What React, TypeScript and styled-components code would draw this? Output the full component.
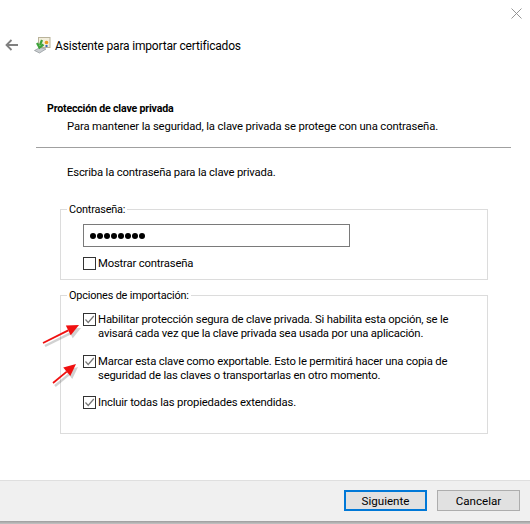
import React from "react";
import styled, { createGlobalStyle } from "styled-components";

const Global = createGlobalStyle`
  html, body { margin: 0; padding: 0; background: #fff; }
  #root { width: 530px; height: 524px; overflow: hidden; }
  * { box-sizing: border-box; }
`;

const Dialog = styled.div`
  position: relative;
  width: 530px;
  height: 524px;
  display: flex;
  flex-direction: column;
  background: #fff;
  color: #000;
  font-family: Roboto, "Noto Sans", sans-serif;
  font-size: 11.3px;
  letter-spacing: -0.18px;
  line-height: 14px;
  overflow: hidden;
`;

const CloseRow = styled.div`
  height: 8px;
  margin-top: 8px;
  display: flex;
  justify-content: flex-end;
`;

const CloseIcon = styled.svg`
  width: 11px;
  height: 11px;
  margin-right: 8px;
`;

const TitleBar = styled.header`
  margin-top: 20px;
  height: 18px;
  display: flex;
  align-items: center;
  padding-left: 5px;
`;

const BackIcon = styled.svg`
  width: 14px;
  height: 12px;
  flex: none;
`;

const WizardIcon = styled.svg`
  width: 17px;
  height: 17px;
  flex: none;
  margin-left: 15px;
`;

const Title = styled.h1`
  margin: 1px 0 0 4px;
  font-size: 12px;
  font-weight: 400;
  line-height: 18px;
  white-space: nowrap;
`;

const Content = styled.main`
  flex: 1;
  display: flex;
  flex-direction: column;
  padding: 47px 19px 0 36px;
`;

const Heading = styled.h2`
  margin: 0 0 0 11px;
  font-size: 10.6px;
  font-weight: 700;
  line-height: 15px;
`;

const Lead = styled.p`
  margin: 4px 0 0 31px;
  white-space: nowrap;
  letter-spacing: -0.14px;
`;

const Rule = styled.hr`
  margin: 13px 0 0;
  border: 0;
  height: 1px;
  background: #a0a0a0;
`;

const Prompt = styled.p`
  margin: 18px 0 0 31px;
`;

const Group = styled.fieldset<{ $height: number; $gap: number }>`
  position: relative;
  margin: ${(p) => p.$gap}px 0 0 24px;
  padding: 0;
  width: 428px;
  height: ${(p) => p.$height}px;
  border: 1px solid #dcdcdc;
  display: flex;
  flex-direction: column;
`;

const Legend = styled.span`
  position: absolute;
  top: -7px;
  left: 6px;
  padding: 0 2px;
  background: #fff;
  font-size: 10.9px;
`;

const PasswordBox = styled.div`
  margin: 14px 0 0 22px;
  width: 267px;
  height: 23px;
  border: 1px solid #7a7a7a;
  display: flex;
  align-items: center;
  gap: 1px;
  padding-left: 6px;
`;

const Dot = styled.i`
  width: 6px;
  height: 6px;
  border-radius: 50%;
  background: #000;
`;

const CheckRow = styled.label<{ $top: number }>`
  margin: ${(p) => p.$top}px 0 0 22px;
  display: flex;
  align-items: flex-start;
  gap: 2px;
`;

const Box = styled.span`
  width: 13px;
  height: 13px;
  flex: none;
  border: 1px solid #333;
  background: #fff;
  display: flex;
  align-items: center;
  justify-content: center;
`;

const Tick = styled.svg`
  width: 11px;
  height: 11px;
`;

const CheckText = styled.span`
  width: 385px;
`;

const Footer = styled.footer`
  height: 41px;
  margin-bottom: 3px;
  background: #f0f0f0;
  border-top: 1px solid #dfdfdf;
  display: flex;
  justify-content: flex-end;
  gap: 10px;
  padding: 9px 10px 0 0;
`;

const BottomEdge = styled.div`
  position: absolute;
  left: 0;
  right: 0;
  bottom: 0;
  height: 3px;
  background: linear-gradient(#9c9c9c, #c4c4c4);
`;

const Button = styled.button<{ $primary?: boolean }>`
  width: 83px;
  height: 21px;
  padding: 0;
  font: inherit;
  font-size: 11.6px;
  letter-spacing: 0;
  color: #000;
  background: #e1e1e1;
  border: ${(p) => (p.$primary ? "2px solid #0078d7" : "1px solid #adadad")};
`;

const ArrowLayer = styled.svg`
  position: absolute;
  left: 0;
  top: 0;
  width: 530px;
  height: 524px;
  pointer-events: none;
`;

const Check = ({ checked }: { checked?: boolean }) => (
  <Box>
    {checked && (
      <Tick viewBox="0 0 11 11">
        <path d="M1.5 5.5 L4.2 8.5 L9.8 2" fill="none" stroke="#777" strokeWidth="1.2" />
      </Tick>
    )}
  </Box>
);

const RedArrow = ({ x1, y1, x2, y2 }: { x1: number; y1: number; x2: number; y2: number }) => {
  const a = Math.atan2(y2 - y1, x2 - x1);
  const len = 12;
  const w = 5.5;
  const bx = x2 - Math.cos(a) * len;
  const by = y2 - Math.sin(a) * len;
  const px = -Math.sin(a) * w;
  const py = Math.cos(a) * w;
  const points = `${x2},${y2} ${bx + px},${by + py} ${bx - px},${by - py}`;
  return (
    <>
      <g opacity="0.22" transform="translate(2 3)">
        <line x1={x1} y1={y1} x2={bx} y2={by} stroke="#333" strokeWidth="2.4" />
        <polygon points={points} fill="#333" />
      </g>
      <line x1={x1} y1={y1} x2={bx} y2={by} stroke="#f01010" strokeWidth="1.8" />
      <polygon points={points} fill="#f01010" />
    </>
  );
};

export default function App() {
  return (
    <Dialog>
      <Global />
      <CloseRow>
        <CloseIcon viewBox="0 0 11 11">
          <path d="M0.5 0.5 L10.5 10.5 M10.5 0.5 L0.5 10.5" stroke="#8a8a8a" strokeWidth="0.9" fill="none" />
        </CloseIcon>
      </CloseRow>
      <TitleBar>
        <BackIcon viewBox="0 0 14 12">
          <path d="M13 6 H2 M6.5 1 L1.5 6 L6.5 11" fill="none" stroke="#808080" strokeWidth="1.8" />
        </BackIcon>
        <WizardIcon viewBox="0 0 17 17">
          <rect x="4.5" y="0.5" width="11.5" height="10" fill="#f3eedc" stroke="#b9b39a" />
          <circle cx="12.5" cy="5.5" r="1.8" fill="#e89a20" />
          <path d="M11.5 8 L13.5 8 L13.5 10 L11.5 10 Z" fill="#3565b5" />
          <path d="M0.5 13.5 L6 10.5 L12 12 L5.5 16 Z" fill="#c9cdd0" stroke="#8c9296" strokeWidth="0.7" />
          <path d="M8 3 L6 8 M3 6 L5.5 10.5 L9.5 7.5" fill="none" stroke="#3da33a" strokeWidth="2.2" />
        </WizardIcon>
        <Title>Asistente para importar certificados</Title>
      </TitleBar>
      <Content>
        <Heading>Protección de clave privada</Heading>
        <Lead>Para mantener la seguridad, la clave privada se protege con una contraseña.</Lead>
        <Rule />
        <Prompt>Escriba la contraseña para la clave privada.</Prompt>
        <Group $height={71} $gap={29}>
          <Legend>Contraseña:</Legend>
          <PasswordBox>
            {Array.from({ length: 8 }).map((_, i) => (
              <Dot key={i} />
            ))}
          </PasswordBox>
          <CheckRow $top={10}>
            <Check />
            <CheckText>Mostrar contraseña</CheckText>
          </CheckRow>
        </Group>
        <Group $height={139} $gap={15}>
          <Legend>Opciones de importación:</Legend>
          <CheckRow $top={17}>
            <Check checked />
            <CheckText>
              Habilitar protección segura de clave privada. Si habilita esta opción, se le avisará cada vez que la clave privada sea usada por una aplicación.
            </CheckText>
          </CheckRow>
          <CheckRow $top={14}>
            <Check checked />
            <CheckText>
              Marcar esta clave como exportable. Esto le permitirá hacer una copia de seguridad de las claves o transportarlas en otro momento.
            </CheckText>
          </CheckRow>
          <CheckRow $top={13}>
            <Check checked />
            <CheckText>Incluir todas las propiedades extendidas.</CheckText>
          </CheckRow>
        </Group>
      </Content>
      <Footer>
        <Button $primary>Siguiente</Button>
        <Button>Cancelar</Button>
      </Footer>
      <BottomEdge />
      <ArrowLayer viewBox="0 0 530 524">
        <RedArrow x1={43} y1={343} x2={79} y2={325} />
        <RedArrow x1={53} y1={383} x2={76} y2={364} />
      </ArrowLayer>
    </Dialog>
  );
}
